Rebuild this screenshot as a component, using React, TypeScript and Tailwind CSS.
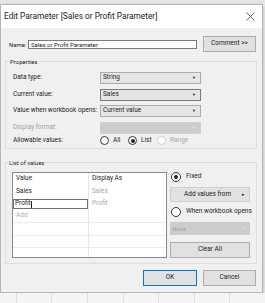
const font = "font-['Roboto','Liberation_Sans',sans-serif]";

function Select({ value, disabled, focused }: { value?: string; disabled?: boolean; focused?: boolean }) {
  return (
    <div
      className={`flex h-[12px] w-[101px] items-center justify-between border px-[2px] ${
        disabled
          ? "border-[#cfcfcf] bg-[#cccccc]"
          : focused
            ? "border-[#7a7a7a] bg-[#e5e5e5]"
            : "border-[#acacac] bg-[#e5e5e5]"
      }`}
    >
      <span className="text-[6.5px] whitespace-nowrap text-[#222]">{value}</span>
      <span className={`mr-[2px] text-[4px] ${disabled ? "text-[#e8e8e8]" : "text-[#222]"}`}>▼</span>
    </div>
  );
}

function Radio({ checked, disabled, size = 9 }: { checked?: boolean; disabled?: boolean; size?: number }) {
  return (
    <div
      className={`flex shrink-0 items-center justify-center rounded-full border bg-white ${
        disabled ? "border-[#d0d0d0]" : "border-[#333]"
      }`}
      style={{ width: size, height: size }}
    >
      {checked && <div className="size-[4px] rounded-full bg-[#222]" />}
    </div>
  );
}

function Button({ label, primary, className = "" }: { label: string; primary?: boolean; className?: string }) {
  return (
    <div
      className={`flex items-center justify-center bg-[#e1e1e1] text-[6.5px] whitespace-nowrap text-[#222] ${
        primary ? "border-[1.5px] border-[#0078d7]" : "border border-[#adadad]"
      } ${className}`}
    >
      {label}
    </div>
  );
}

export default function App() {
  const props = [
    { label: "Data type:", value: "String" },
    { label: "Current value:", value: "Sales", focused: true },
    { label: "Value when workbook opens:", value: "Current value" },
    { label: "Display format:", value: "", disabled: true },
  ];
  const rows = [
    { value: "Value", display: "Display As", head: true },
    { value: "Sales", display: "Sales" },
    { value: "Profit", display: "Profit", editing: true },
    { value: "Add", display: "", add: true },
    { value: "", display: "" },
    { value: "", display: "" },
    { value: "", display: "" },
  ];

  return (
    <div className={`flex h-[303px] w-[265px] flex-col overflow-hidden bg-[#ececec] ${font}`}>
      <div className="h-[4px] shrink-0 bg-[#e6e6e6]" />
      <div className="flex h-[289px] w-[263px] shrink-0 flex-col border border-[#b5b5b5] bg-[#f0f0f0] shadow-[0_2px_4px_rgba(0,0,0,0.25)]">
        {/* title bar */}
        <div className="flex h-[23px] shrink-0 items-center justify-between bg-white pr-[6px] pl-[3px]">
          <span className="text-[8.3px] whitespace-nowrap text-[#222]">Edit Parameter [Sales or Profit Parameter]</span>
          <svg width="9" height="9" viewBox="0 0 9 9" className="mr-[1px]">
            <path d="M0.5 0.5 L8.5 8.5 M8.5 0.5 L0.5 8.5" stroke="#444" strokeWidth="0.8" />
          </svg>
        </div>

        {/* name row */}
        <div className="mt-[8px] flex h-[16px] shrink-0 items-center pr-[6px] pl-[8px]">
          <span className="w-[19px] shrink-0 text-[6px] whitespace-nowrap text-[#222]">Name:</span>
          <div className="flex h-[9px] w-[169px] items-center border border-[#7a7a7a] bg-white px-[2px] text-[6px] whitespace-nowrap text-[#222]">
            Sales or Profit Parameter
          </div>
          <Button label="Comment >>" className="ml-auto h-[16px] w-[53px]" />
        </div>

        {/* properties */}
        <fieldset className="mx-[4px] mt-[5px] h-[92px] w-[252px] shrink-0 border border-[#dcdcdc]">
          <legend className="ml-[3px] px-[1px] text-[6px] text-[#222]">Properties</legend>
          <div className="pl-[7px]">
            <div className="mt-[6px] flex flex-col gap-[4.5px]">
              {props.map((p) => (
                <div key={p.label} className="flex h-[12px] items-center">
                  <span
                    className={`w-[87px] shrink-0 text-[6.5px] whitespace-nowrap ${
                      p.disabled ? "text-[#a0a0a0]" : "text-[#222]"
                    }`}
                  >
                    {p.label}
                  </span>
                  <Select value={p.value} disabled={p.disabled} focused={p.focused} />
                </div>
              ))}
            </div>
            <div className="mt-[1px] flex h-[12px] items-center">
              <span className="w-[87px] shrink-0 text-[6.5px] whitespace-nowrap text-[#222]">Allowable values:</span>
              <div className="flex w-[28px] items-center gap-[4px]">
                <Radio />
                <span className="text-[6.5px] text-[#222]">All</span>
              </div>
              <div className="flex w-[29px] items-center gap-[4px]">
                <Radio checked />
                <span className="text-[6.5px] text-[#222]">List</span>
              </div>
              <div className="flex items-center gap-[4px]">
                <Radio disabled />
                <span className="text-[6.5px] text-[#a8a8a8]">Range</span>
              </div>
            </div>
          </div>
        </fieldset>

        {/* list of values */}
        <fieldset className="mx-[4px] mt-[9px] h-[106px] w-[252px] shrink-0 border border-[#dcdcdc]">
          <legend className="ml-[2px] px-[1px] text-[6px] text-[#222]">List of values</legend>
          <div className="mt-[5px] flex pl-[6px]">
            <div className="flex h-[86px] w-[155px] flex-col overflow-hidden border border-[#8a8a8a] bg-white">
              {rows.map((r, i) => (
                <div key={i} className={`flex h-[12.5px] shrink-0 ${i >= 3 ? "border-b border-[#ececec]" : ""}`}>
                  <div className="flex w-[76px] items-center border-r border-[#e6e6e6]">
                    {r.editing ? (
                      <div className="flex h-[10px] w-[76px] items-center border border-[#707070] px-[1px] text-[6.5px] text-[#222]">
                        Profit<span className="h-[7px] w-[0.7px] bg-[#222]" />
                      </div>
                    ) : (
                      <span className={`pl-[3px] text-[6.5px] ${r.add ? "text-[#b0b0b0]" : "text-[#222]"}`}>
                        {r.value}
                      </span>
                    )}
                  </div>
                  <div className="flex items-center pl-[3px]">
                    <span className={`text-[6.5px] whitespace-nowrap ${r.head ? "text-[#222]" : "text-[#a8a8a8]"}`}>
                      {r.display}
                    </span>
                  </div>
                </div>
              ))}
            </div>
            <div className="ml-[3px] flex w-[80px] flex-col">
              <div className="flex h-[10px] items-center gap-[5px] pl-[1px]">
                <Radio checked size={10} />
                <span className="text-[6.5px] text-[#222]">Fixed</span>
              </div>
              <div className="mt-[5px] flex h-[15px] items-center border border-[#cfcfcf] bg-[#e1e1e1] text-[6.5px] whitespace-nowrap text-[#222]">
                <span className="ml-[13px]">Add values from</span>
                <span className="mr-[4px] ml-auto text-[5px]">▸</span>
              </div>
              <div className="mt-[5px] flex h-[10px] items-center gap-[5px] pl-[1px]">
                <Radio size={10} />
                <span className="text-[6.5px] whitespace-nowrap text-[#222]">When workbook opens</span>
              </div>
              <div className="mt-[5px] flex h-[13px] items-center justify-between bg-[#cccccc] px-[2px]">
                <span className="text-[6px] text-[#a0a0a0]">None</span>
                <span className="mr-[2px] text-[4px] text-[#e8e8e8]">▼</span>
              </div>
              <Button label="Clear All" className="mt-[7px] h-[16px]" />
            </div>
          </div>
        </fieldset>

        {/* footer */}
        <div className="mt-[6px] flex shrink-0 gap-[6px] pr-[6px] pl-[142px]">
          <Button label="OK" primary className="h-[16px] w-[54px]" />
          <Button label="Cancel" className="h-[16px] w-[53px]" />
        </div>
      </div>

      {/* worksheet behind */}
      <div className="flex flex-1 bg-[#f4f4f4]">
        {[17, 35, 36, 36, 35, 36, 35].map((w, i) => (
          <div key={i} className="h-full shrink-0 border-r border-[#e0e0e0]" style={{ width: w }} />
        ))}
      </div>
    </div>
  );
}
